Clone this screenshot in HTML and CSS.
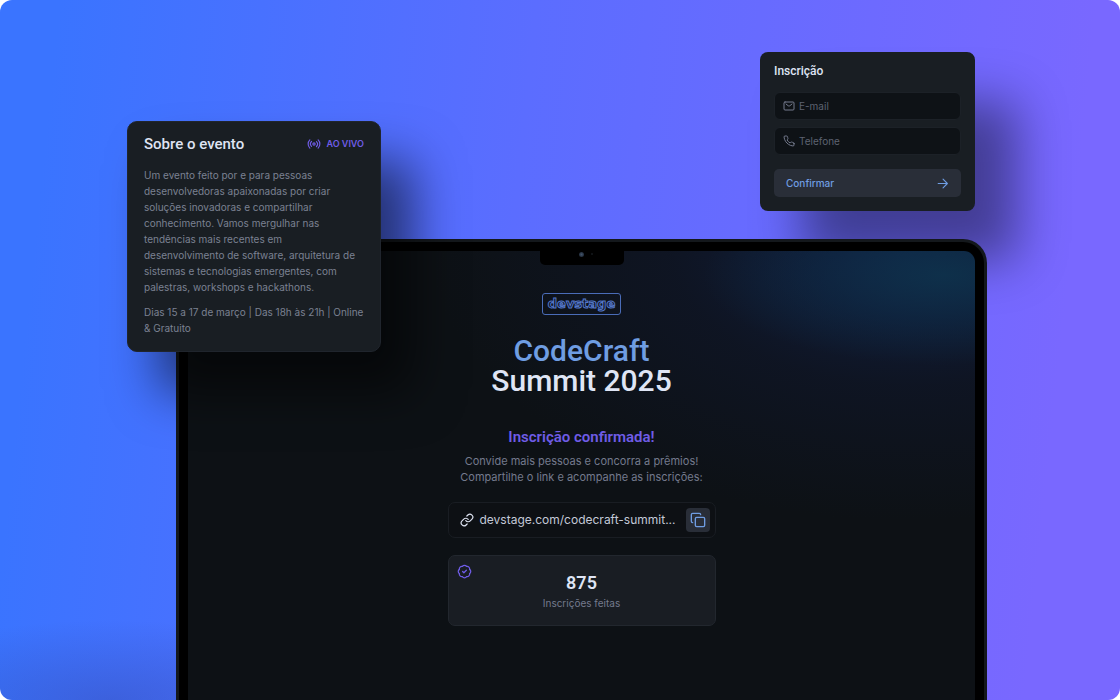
FILE: index.html
```html
<!DOCTYPE html>
<html lang="pt-BR">
<head>
<meta charset="utf-8">
<meta name="viewport" content="width=device-width, initial-scale=1">
<title>CodeCraft Summit 2025</title>
<link rel="stylesheet" href="styles.css">
</head>
<body>
<main class="scene">
  <section class="card signup">
    <h2 class="signup-title">Inscrição</h2>
    <form class="signup-form">
      <label class="field">
        <svg class="icon-sm" viewBox="0 0 24 24" aria-hidden="true"><rect x="2" y="4" width="20" height="16" rx="2"/><path d="m18 8-4.5 3.6a2.4 2.4 0 0 1-3 0L6 8"/></svg>
        <input class="field-input" type="email" placeholder="E-mail" aria-label="E-mail">
      </label>
      <label class="field">
        <svg class="icon-sm" viewBox="0 0 24 24" aria-hidden="true"><path d="M22 16.92v3a2 2 0 0 1-2.18 2 19.79 19.79 0 0 1-8.63-3.07 19.5 19.5 0 0 1-6-6 19.79 19.79 0 0 1-3.07-8.67A2 2 0 0 1 4.11 2h3a2 2 0 0 1 2 1.72 12.84 12.84 0 0 0 .7 2.81 2 2 0 0 1-.45 2.11L8.09 9.91a16 16 0 0 0 6 6l1.27-1.27a2 2 0 0 1 2.11-.45 12.84 12.84 0 0 0 2.81.7A2 2 0 0 1 22 16.92z"/></svg>
        <input class="field-input" type="tel" placeholder="Telefone" aria-label="Telefone">
      </label>
      <button class="confirm" type="button">Confirmar
        <svg class="icon-md" viewBox="0 0 24 24" aria-hidden="true"><path d="M4 12h17M13 4l8 8-8 8"/></svg>
      </button>
    </form>
  </section>

  <div class="laptop">
    <div class="screen">
      <div class="notch"><span class="camera"></span><span class="sensor"></span></div>
      <div class="content">
        <div class="logo">devstage</div>
        <h1 class="title"><span class="title-accent">CodeCraft</span><br>Summit 2025</h1>
        <h2 class="confirmed">Inscrição confirmada!</h2>
        <p class="invite">Convide mais pessoas e concorra a prêmios!<br>Compartilhe o link e acompanhe as inscrições:</p>
        <div class="link-box">
          <svg class="icon-link" viewBox="0 0 24 24" aria-hidden="true"><path d="M10 13a5 5 0 0 0 7.54.54l3-3a5 5 0 0 0-7.07-7.07l-1.72 1.71"/><path d="M14 11a5 5 0 0 0-7.54-.54l-3 3a5 5 0 0 0 7.07 7.07l1.71-1.71"/></svg>
          <a class="link-url" href="#">devstage.com/codecraft-summit...</a>
          <button class="copy" type="button" aria-label="Copiar link">
            <svg class="icon-copy" viewBox="0 0 24 24" aria-hidden="true"><rect x="8" y="8" width="14" height="14" rx="2"/><path d="M4 16c-1.1 0-2-.9-2-2V4c0-1.1.9-2 2-2h10c1.1 0 2 .9 2 2"/></svg>
          </button>
        </div>
        <div class="stats">
          <svg class="icon-badge" viewBox="0 0 24 24" aria-hidden="true"><path d="M3.85 8.62a4 4 0 0 1 4.78-4.77 4 4 0 0 1 6.74 0 4 4 0 0 1 4.78 4.78 4 4 0 0 1 0 6.74 4 4 0 0 1-4.77 4.78 4 4 0 0 1-6.75 0 4 4 0 0 1-4.78-4.77 4 4 0 0 1 0-6.76Z"/><path d="m9 12 2 2 4-4"/></svg>
          <strong class="stats-value">875</strong>
          <span class="stats-label">Inscrições feitas</span>
        </div>
      </div>
    </div>
  </div>

  <section class="card about">
    <header class="about-head">
      <h2 class="about-title">Sobre o evento</h2>
      <span class="live">
        <svg class="icon-live" viewBox="0 0 24 24" aria-hidden="true"><path d="M4.9 19.1C1 15.2 1 8.8 4.9 4.9M7.8 16.2c-2.3-2.3-2.3-6.1 0-8.5M16.2 7.8c2.3 2.3 2.3 6.1 0 8.5M19.1 4.9C23 8.8 23 15.1 19.1 19"/><circle cx="12" cy="12" r="2"/></svg>
        AO VIVO
      </span>
    </header>
    <p class="about-text">Um evento feito por e para pessoas<br>desenvolvedoras apaixonadas por criar<br>soluções inovadoras e compartilhar<br>conhecimento. Vamos mergulhar nas<br>tendências mais recentes em<br>desenvolvimento de software, arquitetura de<br>sistemas e tecnologias emergentes, com<br>palestras, workshops e hackathons.</p>
    <p class="about-text">Dias 15 a 17 de março | Das 18h às 21h | Online<br>&amp; Gratuito</p>
  </section>
</main>
</body>
</html>
```
FILE: styles.css
```css
* { box-sizing: border-box; }

body {
  margin: 0;
  background: #fff;
  color: #dfe4f3;
  font-family: Inter, "Open Sans", sans-serif;
  font-size: 11px;
  line-height: 16px;
}

h1, h2, p { margin: 0; }

h1, h2, .stats-value { font-family: Roboto, Inter, sans-serif; }

button, input { font: inherit; }

svg {
  flex: none;
  fill: none;
  stroke: currentColor;
  stroke-width: 2;
  stroke-linecap: round;
  stroke-linejoin: round;
}

.scene {
  position: relative;
  display: flex;
  min-height: 100vh;
  padding: 239px 133px 0 176px;
  overflow: hidden;
  border-radius: 12px;
  background:
    radial-gradient(ellipse 260px 80px at 110px 100%, rgba(50, 70, 170, 0.4), transparent),
    linear-gradient(96deg, #3a74ff 5%, #5b6dff 45%, #7968ff 92%);
}

/* Laptop */
.laptop {
  position: relative;
  display: flex;
  flex: 1;
  padding: 9px 9px 0;
  border: 3px solid #14181c;
  border-bottom: 0;
  border-radius: 24px 24px 0 0;
  background: #000;
}

.screen {
  display: flex;
  flex: 1;
  flex-direction: column;
  align-items: center;
  border-radius: 11px 11px 0 0;
  background:
    radial-gradient(ellipse 240px 90px at 96% 24px, rgba(14, 50, 76, 0.9), rgba(14, 46, 74, 0.5) 50%, transparent),
    radial-gradient(ellipse 480px 270px at 92% 0, rgba(17, 34, 74, 0.85), rgba(16, 24, 48, 0.5) 50%, transparent),
    #0d1115;
}

.notch {
  display: flex;
  align-items: center;
  justify-content: center;
  gap: 7px;
  width: 84px;
  height: 14px;
  padding: 0 0 8px 8px;
  border-radius: 0 0 5px 5px;
  background: #000;
}

.camera {
  width: 5px;
  height: 5px;
  border-radius: 50%;
  background: radial-gradient(#42546c, #141c26);
}

.sensor {
  width: 2px;
  height: 2px;
  border-radius: 50%;
  background: #15181d;
}

.content {
  display: flex;
  flex-direction: column;
  align-items: center;
  width: 268px;
  padding: 28px 0 73px;
  text-align: center;
}

.logo {
  padding: 0 5px 1px;
  border: 1px solid #4a6cb8;
  border-radius: 3px;
  color: #0e1222;
  font: 700 13px/19px "DejaVu Sans", sans-serif;
  -webkit-text-stroke: 1px #5377c8;
}

.title {
  padding-top: 21px;
  color: #dfe5f5;
  font-size: 30px;
  font-weight: 500;
  line-height: 30px;
}

.title-accent { color: #6f9de2; }

.confirmed {
  padding-top: 31px;
  color: #6f5ce6;
  font-size: 15px;
  font-weight: 600;
  line-height: 20px;
}

.invite {
  padding-top: 6px;
  color: #747a8d;
  white-space: nowrap;
}

.link-box {
  display: flex;
  align-items: center;
  gap: 6px;
  width: 100%;
  margin-top: 17px;
  padding: 5px 5px 5px 11px;
  border: 1px solid #191d23;
  border-radius: 7px;
  background: #0d1014;
}

.link-url {
  flex: 1;
  color: #c3c9d8;
  font-size: 12px;
  text-align: left;
  text-decoration: none;
  white-space: nowrap;
}

.icon-link { width: 14px; height: 14px; color: #dfe4f3; }

.copy {
  display: flex;
  padding: 4px;
  border: 0;
  border-radius: 4px;
  background: #292e38;
  color: #6f9de2;
}

.icon-copy { width: 16px; height: 16px; }

.stats {
  position: relative;
  display: flex;
  flex-direction: column;
  align-items: center;
  gap: 1px;
  width: 100%;
  margin-top: 17px;
  padding: 16px 0 14px;
  border: 1px solid #22272e;
  border-radius: 7px;
  background: #191d23;
}

.icon-badge {
  position: absolute;
  top: 8px;
  left: 8px;
  width: 15px;
  height: 15px;
  color: #6f5ce6;
}

.stats-value {
  color: #dfe5f5;
  font-size: 18px;
  font-weight: 600;
  line-height: 22px;
}

.stats-label { color: #747a8d; font-size: 10px; }

/* Floating cards */
.card {
  position: absolute;
  background: #191e23;
}

.about {
  top: 121px;
  left: 127px;
  display: grid;
  gap: 9px;
  width: 254px;
  padding: 14px 16px 15px;
  border: 1px solid #20252d;
  border-radius: 10px;
  box-shadow: 32px 40px 50px rgba(0, 0, 0, 0.55);
}

.about-head {
  display: flex;
  align-items: center;
  justify-content: space-between;
  padding-bottom: 6px;
}

.about-title {
  color: #dfe4f3;
  font-size: 15px;
  font-weight: 500;
}

.live {
  display: flex;
  align-items: center;
  gap: 5px;
  color: #6f5ce6;
  font-size: 9px;
  font-weight: 600;
}

.icon-live { width: 14px; height: 14px; }

.about-text {
  color: #7b8192;
  font-size: 10px;
}

.signup {
  top: 52px;
  right: 145px;
  width: 215px;
  padding: 11px 14px 14px;
  border-radius: 8px;
  box-shadow: 42px 50px 50px rgba(0, 0, 0, 0.42);
}

.signup-title {
  color: #dfe4f3;
  font-size: 12px;
  font-weight: 500;
}

.signup-form {
  display: flex;
  flex-direction: column;
  gap: 7px;
  padding-top: 13px;
}

.field {
  display: flex;
  align-items: center;
  gap: 4px;
  height: 28px;
  padding: 0 8px;
  border: 1px solid #1c2127;
  border-radius: 6px;
  background: #0e1216;
  color: #747a8d;
}

.field-input {
  flex: 1;
  min-width: 0;
  padding: 0;
  border: 0;
  background: none;
  color: #dfe4f3;
  font-size: 10px;
}

.field-input::placeholder { color: #5d6271; opacity: 1; }

.icon-sm { width: 12px; height: 12px; }

.confirm {
  display: flex;
  align-items: center;
  justify-content: space-between;
  height: 28px;
  margin-top: 7px;
  padding: 0 12px;
  border: 0;
  border-radius: 5px;
  background: #292e38;
  color: #6f9de2;
  font-size: 10px;
  font-weight: 500;
}

.icon-md { width: 13px; height: 13px; }
```
